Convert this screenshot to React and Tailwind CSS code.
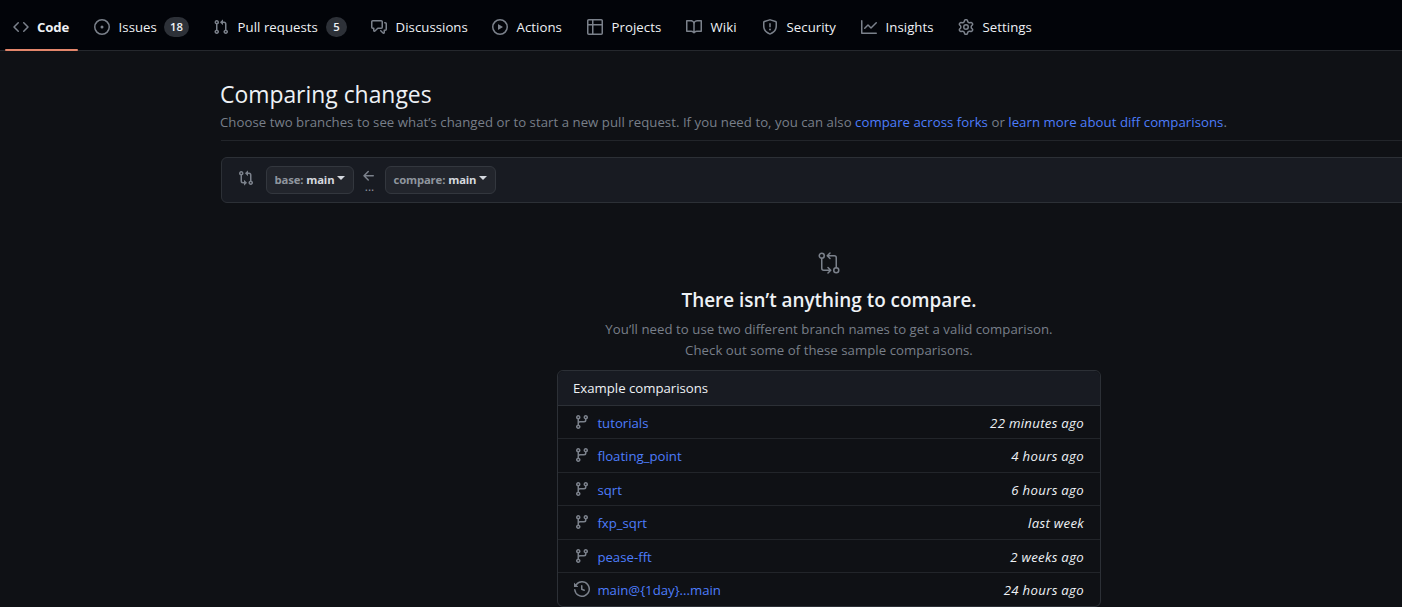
const PATHS = {
  code: "m11.28 3.22 4.25 4.25a.75.75 0 0 1 0 1.06l-4.25 4.25a.749.749 0 0 1-1.275-.326.749.749 0 0 1 .215-.734L13.94 8l-3.72-3.72a.749.749 0 0 1 .326-1.275.749.749 0 0 1 .734.215Zm-6.56 0a.751.751 0 0 1 1.042.018.751.751 0 0 1 .018 1.042L2.06 8l3.72 3.72a.749.749 0 0 1-.326 1.275.749.749 0 0 1-.734-.215L.47 8.53a.75.75 0 0 1 0-1.06Z",
  issue: "M8 9.5a1.5 1.5 0 1 0 0-3 1.5 1.5 0 0 0 0 3ZM8 0a8 8 0 1 1 0 16A8 8 0 0 1 8 0ZM1.5 8a6.5 6.5 0 1 0 13 0 6.5 6.5 0 0 0-13 0Z",
  pull: "M1.5 3.25a2.25 2.25 0 1 1 3 2.122v5.256a2.251 2.251 0 1 1-1.5 0V5.372A2.25 2.25 0 0 1 1.5 3.25Zm5.677-.177L9.573.677A.25.25 0 0 1 10 .854V2.5h1A2.5 2.5 0 0 1 13.5 5v5.628a2.251 2.251 0 1 1-1.5 0V5a1 1 0 0 0-1-1h-1v1.646a.25.25 0 0 1-.427.177L7.177 3.427a.25.25 0 0 1 0-.354ZM3.75 2.5a.75.75 0 1 0 0 1.5.75.75 0 0 0 0-1.5Zm0 9.5a.75.75 0 1 0 0 1.5.75.75 0 0 0 0-1.5Zm8.25.75a.75.75 0 1 0 1.5 0 .75.75 0 0 0-1.5 0Z",
  discussion: "M1.75 1h8.5c.966 0 1.75.784 1.75 1.75v5.5A1.75 1.75 0 0 1 10.25 10H7.061l-2.574 2.573A1.458 1.458 0 0 1 2 11.543V10h-.25A1.75 1.75 0 0 1 0 8.25v-5.5C0 1.784.784 1 1.75 1ZM1.5 2.75v5.5c0 .138.112.25.25.25h1a.75.75 0 0 1 .75.75v2.19l2.72-2.72a.749.749 0 0 1 .53-.22h3.5a.25.25 0 0 0 .25-.25v-5.5a.25.25 0 0 0-.25-.25h-8.5a.25.25 0 0 0-.25.25Zm13 2a.25.25 0 0 0-.25-.25h-.5a.75.75 0 0 1 0-1.5h.5c.966 0 1.75.784 1.75 1.75v5.5A1.75 1.75 0 0 1 14.25 12H14v1.543a1.458 1.458 0 0 1-2.487 1.03L9.22 12.28a.749.749 0 0 1 .326-1.275.749.749 0 0 1 .734.215l2.22 2.22v-2.19a.75.75 0 0 1 .75-.75h1a.25.25 0 0 0 .25-.25Z",
  play: "M8 0a8 8 0 1 1 0 16A8 8 0 0 1 8 0ZM1.5 8a6.5 6.5 0 1 0 13 0 6.5 6.5 0 0 0-13 0Zm4.879-2.773 4.264 2.559a.25.25 0 0 1 0 .428l-4.264 2.559A.25.25 0 0 1 6 10.559V5.442a.25.25 0 0 1 .379-.215Z",
  table: "M0 1.75C0 .784.784 0 1.75 0h12.5C15.216 0 16 .784 16 1.75v12.5A1.75 1.75 0 0 1 14.25 16H1.75A1.75 1.75 0 0 1 0 14.25ZM6.5 6.5v8h7.75a.25.25 0 0 0 .25-.25V6.5Zm8-1.5V1.75a.25.25 0 0 0-.25-.25H6.5V5Zm-13 1.5v7.75c0 .138.112.25.25.25H5v-8ZM5 5V1.5H1.75a.25.25 0 0 0-.25.25V5Z",
  book: "M0 1.75A.75.75 0 0 1 .75 1h4.253c1.227 0 2.317.59 3 1.501A3.743 3.743 0 0 1 11.006 1h4.245a.75.75 0 0 1 .75.75v10.5a.75.75 0 0 1-.75.75h-4.507a2.25 2.25 0 0 0-1.591.659l-.622.621a.75.75 0 0 1-1.06 0l-.622-.621A2.25 2.25 0 0 0 5.258 13H.75a.75.75 0 0 1-.75-.75Zm7.251 10.324.004-5.073-.002-2.253A2.25 2.25 0 0 0 5.003 2.5H1.5v9h3.757a3.75 3.75 0 0 1 1.994.574ZM8.755 4.75l-.004 7.322a3.752 3.752 0 0 1 1.992-.572H14.5v-9h-3.495a2.25 2.25 0 0 0-2.25 2.25Z",
  shield: "M7.467.133a1.748 1.748 0 0 1 1.066 0l5.25 1.68A1.75 1.75 0 0 1 15 3.48V7c0 1.566-.32 3.182-1.303 4.682-.983 1.498-2.585 2.813-5.032 3.855a1.697 1.697 0 0 1-1.33 0c-2.447-1.042-4.049-2.357-5.032-3.855C1.32 10.182 1 8.566 1 7V3.48a1.75 1.75 0 0 1 1.217-1.667Zm.61 1.429a.25.25 0 0 0-.153 0l-5.25 1.68a.25.25 0 0 0-.174.238V7c0 1.358.275 2.666 1.057 3.86.784 1.194 2.121 2.34 4.366 3.297a.196.196 0 0 0 .154 0c2.245-.956 3.582-2.104 4.366-3.298C13.225 9.666 13.5 8.36 13.5 7V3.48a.251.251 0 0 0-.174-.237l-5.25-1.68ZM8.75 4.75v3a.75.75 0 0 1-1.5 0v-3a.75.75 0 0 1 1.5 0ZM9 10.5a1 1 0 1 1-2 0 1 1 0 0 1 2 0Z",
  graph: "M1.5 1.75V13.5h13.75a.75.75 0 0 1 0 1.5H.75a.75.75 0 0 1-.75-.75V1.75a.75.75 0 0 1 1.5 0Zm14.28 2.53-5.25 5.25a.75.75 0 0 1-1.06 0L7 7.06 4.28 9.78a.751.751 0 0 1-1.042-.018.751.751 0 0 1-.018-1.042l3.25-3.25a.75.75 0 0 1 1.06 0L10 7.94l4.72-4.72a.751.751 0 0 1 1.042.018.751.751 0 0 1 .018 1.042Z",
  gear: "M8 0a8.2 8.2 0 0 1 .701.031C9.444.095 9.99.645 10.16 1.29l.288 1.107c.018.066.079.158.212.224.231.114.454.243.668.386.123.082.233.09.299.071l1.103-.303c.644-.176 1.392.021 1.82.63.27.385.506.792.704 1.218.315.675.111 1.422-.364 1.891l-.814.806c-.049.048-.098.147-.088.294.016.257.016.515 0 .772-.01.147.038.246.088.294l.814.806c.475.469.679 1.216.364 1.891a7.977 7.977 0 0 1-.704 1.217c-.428.61-1.176.807-1.82.63l-1.102-.302c-.067-.019-.177-.011-.3.071a5.909 5.909 0 0 1-.668.386c-.133.066-.194.158-.211.224l-.29 1.106c-.168.646-.715 1.196-1.458 1.26a8.006 8.006 0 0 1-1.402 0c-.743-.064-1.289-.614-1.458-1.26l-.289-1.106c-.018-.066-.079-.158-.212-.224a5.738 5.738 0 0 1-.668-.386c-.123-.082-.233-.09-.299-.071l-1.103.303c-.644.176-1.392-.021-1.82-.63a8.12 8.12 0 0 1-.704-1.218c-.315-.675-.111-1.422.363-1.891l.815-.806c.05-.048.098-.147.088-.294a6.214 6.214 0 0 1 0-.772c.01-.147-.038-.246-.088-.294l-.815-.806C.635 6.045.431 5.298.746 4.623a7.92 7.92 0 0 1 .704-1.217c.428-.61 1.176-.807 1.82-.63l1.102.302c.067.019.177.011.3-.071.214-.143.437-.272.668-.386.133-.066.194-.158.211-.224l.29-1.106C6.009.645 6.556.095 7.299.03 7.53.01 7.764 0 8 0Zm-.571 1.525c-.036.003-.108.036-.137.146l-.289 1.105c-.147.561-.549.967-.998 1.189-.173.086-.34.183-.5.29-.417.278-.97.423-1.529.27l-1.103-.303c-.109-.03-.175.016-.195.045-.22.312-.412.644-.573.99-.014.031-.021.11.059.19l.815.806c.411.406.562.957.53 1.456a4.709 4.709 0 0 0 0 .582c.032.499-.119 1.05-.53 1.456l-.815.806c-.081.08-.073.159-.059.19.162.346.353.677.573.989.02.03.085.076.195.046l1.102-.303c.56-.153 1.113-.008 1.53.27.161.107.328.204.501.29.447.222.85.629.997 1.189l.289 1.105c.029.109.101.143.137.146a6.6 6.6 0 0 0 1.142 0c.036-.003.108-.036.137-.146l.289-1.105c.147-.561.549-.967.998-1.189.173-.086.34-.183.5-.29.417-.278.97-.423 1.529-.27l1.103.303c.109.029.175-.016.195-.045.22-.313.411-.644.573-.99.014-.031.021-.11-.059-.19l-.815-.806c-.411-.406-.562-.957-.53-1.456a4.709 4.709 0 0 0 0-.582c-.032-.499.119-1.05.53-1.456l.815-.806c.081-.08.073-.159.059-.19a6.464 6.464 0 0 0-.573-.989c-.02-.03-.085-.076-.195-.046l-1.102.303c-.56.153-1.113.008-1.53-.27a4.44 4.44 0 0 0-.501-.29c-.447-.222-.85-.629-.997-1.189l-.289-1.105c-.029-.11-.101-.143-.137-.146a6.6 6.6 0 0 0-1.142 0ZM11 8a3 3 0 1 1-6 0 3 3 0 0 1 6 0ZM9.5 8a1.5 1.5 0 1 0-3.001.001A1.5 1.5 0 0 0 9.5 8Z",
  compare: "M9.573.677A.25.25 0 0 1 10 .854V2.5h1A2.5 2.5 0 0 1 13.5 5v5.628a2.251 2.251 0 1 1-1.5 0V5a1 1 0 0 0-1-1h-1v1.646a.25.25 0 0 1-.427.177L7.177 3.427a.25.25 0 0 1 0-.354ZM6 12v-1.646a.25.25 0 0 1 .427-.177l2.396 2.396a.25.25 0 0 1 0 .354l-2.396 2.396A.25.25 0 0 1 6 15.146V13.5H5A2.5 2.5 0 0 1 2.5 11V5.372a2.25 2.25 0 1 1 1.5 0V11a1 1 0 0 0 1 1ZM4 3.25a.75.75 0 1 0-1.5 0 .75.75 0 0 0 1.5 0ZM12.75 12a.75.75 0 1 0 0 1.5.75.75 0 0 0 0-1.5Z",
  arrow: "M7.78 12.53a.75.75 0 0 1-1.06 0L2.47 8.28a.75.75 0 0 1 0-1.06l4.25-4.25a.751.751 0 0 1 1.042.018.751.751 0 0 1 .018 1.042L4.81 7h7.44a.75.75 0 0 1 0 1.5H4.81l2.97 2.97a.75.75 0 0 1 0 1.06Z",
  branch: "M9.5 3.25a2.25 2.25 0 1 1 3 2.122V6A2.5 2.5 0 0 1 10 8.5H6a1 1 0 0 0-1 1v1.128a2.251 2.251 0 1 1-1.5 0V5.372a2.25 2.25 0 1 1 1.5 0v1.836A2.493 2.493 0 0 1 6 7h4a1 1 0 0 0 1-1v-.628A2.25 2.25 0 0 1 9.5 3.25Zm-6 0a.75.75 0 1 0 1.5 0 .75.75 0 0 0-1.5 0Zm8.25-.75a.75.75 0 1 0 0 1.5.75.75 0 0 0 0-1.5ZM4.25 12a.75.75 0 1 0 0 1.5.75.75 0 0 0 0-1.5Z",
  history: "m.427 1.927 1.215 1.215a8.002 8.002 0 1 1-1.6 5.685.75.75 0 1 1 1.493-.154 6.5 6.5 0 1 0 1.18-4.458l1.358 1.358A.25.25 0 0 1 3.896 6H.25A.25.25 0 0 1 0 5.75V2.104a.25.25 0 0 1 .427-.177ZM7.75 4a.75.75 0 0 1 .75.75v2.992l2.028.812a.75.75 0 0 1-.557 1.392l-2.5-1A.751.751 0 0 1 7 8.25v-3.5A.75.75 0 0 1 7.75 4Z",
};

function Icon({ name, className = "size-4" }) {
  return (
    <svg viewBox="0 0 16 16" fill="currentColor" className={`shrink-0 text-[#7b818b] ${className}`}>
      <path d={PATHS[name]} />
    </svg>
  );
}

function LargeCompareIcon() {
  return (
    <svg viewBox="0 0 24 24" fill="none" stroke="currentColor" strokeWidth="1.5" strokeLinecap="round" strokeLinejoin="round" className="size-6 shrink-0 text-[#7b818b]">
      <circle cx="4.75" cy="4.75" r="2.5" />
      <circle cx="19.25" cy="19.25" r="2.5" />
      <path d="M4.75 7.25v10a2 2 0 0 0 2 2h6.75M11 16.5l2.75 2.75L11 22M19.25 16.75v-10a2 2 0 0 0-2-2H10.5M13 2l-2.75 2.75L13 7.5" />
    </svg>
  );
}

const TABS = [
  { icon: "code", label: "Code", width: "w-[73px]", active: true },
  { icon: "issue", label: "Issues", width: "w-[111px]", badge: "18", badgeWidth: "w-[25px]" },
  { icon: "pull", label: "Pull requests", width: "w-[150px]", badge: "5", badgeWidth: "w-[21px]" },
  { icon: "discussion", label: "Discussions", width: "w-[113px]" },
  { icon: "play", label: "Actions", width: "w-[87px]" },
  { icon: "table", label: "Projects", width: "w-[91px]" },
  { icon: "book", label: "Wiki", width: "w-[68px]" },
  { icon: "shield", label: "Security", width: "w-[91px]" },
  { icon: "graph", label: "Insights", width: "w-[89px]" },
  { icon: "gear", label: "Settings", width: "w-[91px]" },
];

const ROWS = [
  { name: "tutorials", time: "22 minutes ago" },
  { name: "floating_point", time: "4 hours ago" },
  { name: "sqrt", time: "6 hours ago" },
  { name: "fxp_sqrt", time: "last week" },
  { name: "pease-fft", time: "2 weeks ago" },
  { name: "main@{1day}...main", time: "24 hours ago", icon: "history" },
];

function BranchButton({ label, width }) {
  return (
    <button className={`flex h-7 ${width} items-center rounded-md border border-[#33373e] bg-[#22252c] pl-[7.5px] text-[11.3px] font-bold tracking-[-0.15px] whitespace-nowrap text-[#d5d9df]`}>
      <span className="mr-[3px] text-[#8f959e]">{label}:</span>
      <span>main</span>
      <span className="mt-[-4px] ml-[3px] border-x-4 border-t-4 border-x-transparent border-t-[#d5d9df]" />
    </button>
  );
}

export default function App() {
  return (
    <div className="h-[607px] w-full overflow-hidden bg-[#0f1115] font-['Open_Sans','Noto_Sans',sans-serif] text-[13.2px] text-[#eef1f5]">
      <nav className="flex h-[51px] gap-2 border-b border-[#25282d] bg-[#020409] pl-[5px]">
        {TABS.map((t) => (
          <div key={t.label} className={`relative flex h-[51px] shrink-0 items-center pt-[3px] pl-2 whitespace-nowrap ${t.width}`}>
            <Icon name={t.icon} />
            <span className={t.active ? "ml-2 pt-[2px] font-bold tracking-[-0.1px]" : "ml-[8.6px] pt-[2px] tracking-[0.04px]"}>{t.label}</span>
            {t.badge && (
              <span className={`absolute right-2 flex h-5 items-center justify-center rounded-full bg-[#2d3138] pt-px text-[11.3px] font-semibold ${t.badgeWidth}`}>
                {t.badge}
              </span>
            )}
            {t.active && <span className="absolute bottom-0 left-0 h-[2px] w-[73px] rounded-full bg-[#e3866b]" />}
          </div>
        ))}
      </nav>

      <main className="ml-[221px] w-[1216px] pt-[27px]">
        <header className="h-[63px] border-b border-[#22252a]">
          <h1 className="-ml-px h-8 pt-px text-[22.9px] leading-8">Comparing changes</h1>
          <p className="-ml-px h-6 leading-6 tracking-[0.042px] whitespace-nowrap text-[#787f89]">
            Choose two branches to see what’s changed or to start a new pull request. If you need to, you can also{" "}
            <a className="text-[#4d7dfb]">compare across forks</a> or{" "}
            <a className="text-[#4d7dfb]">learn more about diff comparisons</a>.
          </p>
        </header>

        <div className="mt-4 flex h-[46px] items-center rounded-md border border-[#2c3036] bg-[#181b22] pl-4">
          <Icon name="compare" className="mt-[-4px] mr-3 size-4" />
          <BranchButton label="base" width="w-[88px]" />
          <div className="mx-[7px] flex h-7 w-[17px] flex-col items-center">
            <Icon name="arrow" className="mt-[2px] -ml-[2px] size-4" />
            <span className="-mt-[3px] text-[12px] leading-3 text-[#8f959e]">...</span>
          </div>
          <BranchButton label="compare" width="w-[111px]" />
        </div>

        <section className="flex flex-col items-center pt-12">
          <LargeCompareIcon />
          <h2 className="mt-[10px] text-[18.9px] leading-[30px] font-semibold">There isn’t anything to compare.</h2>
          <p className="mt-1 text-center leading-[21px] tracking-[0.05px] text-[#787f89]">
            You’ll need to use two different branch names to get a valid comparison.
            <br />
            Check out some of these sample comparisons.
          </p>
          <div className="mt-[9px] w-[544px] rounded-md border border-[#2c3036]">
            <div className="flex h-[34px] items-center rounded-t-md bg-[#181b22] pt-[2px] pl-[15px]">Example comparisons</div>
            {ROWS.map((r, i) => (
              <div key={r.name} className={`flex items-center border-t pr-4 pl-4 ${i === 0 ? "border-[#2c3036]" : "border-[#22252a]"} ${i % 2 ? "h-[34px]" : "h-[33px]"}`}>
                <Icon name={r.icon ?? "branch"} className="-mt-px size-4" />
                <a className="ml-[7.4px] pt-[3px] text-[#4d7dfb]">{r.name}</a>
                <em className="ml-auto pt-[3px] tracking-[0.3px]">{r.time}</em>
              </div>
            ))}
          </div>
        </section>
      </main>
    </div>
  );
}
